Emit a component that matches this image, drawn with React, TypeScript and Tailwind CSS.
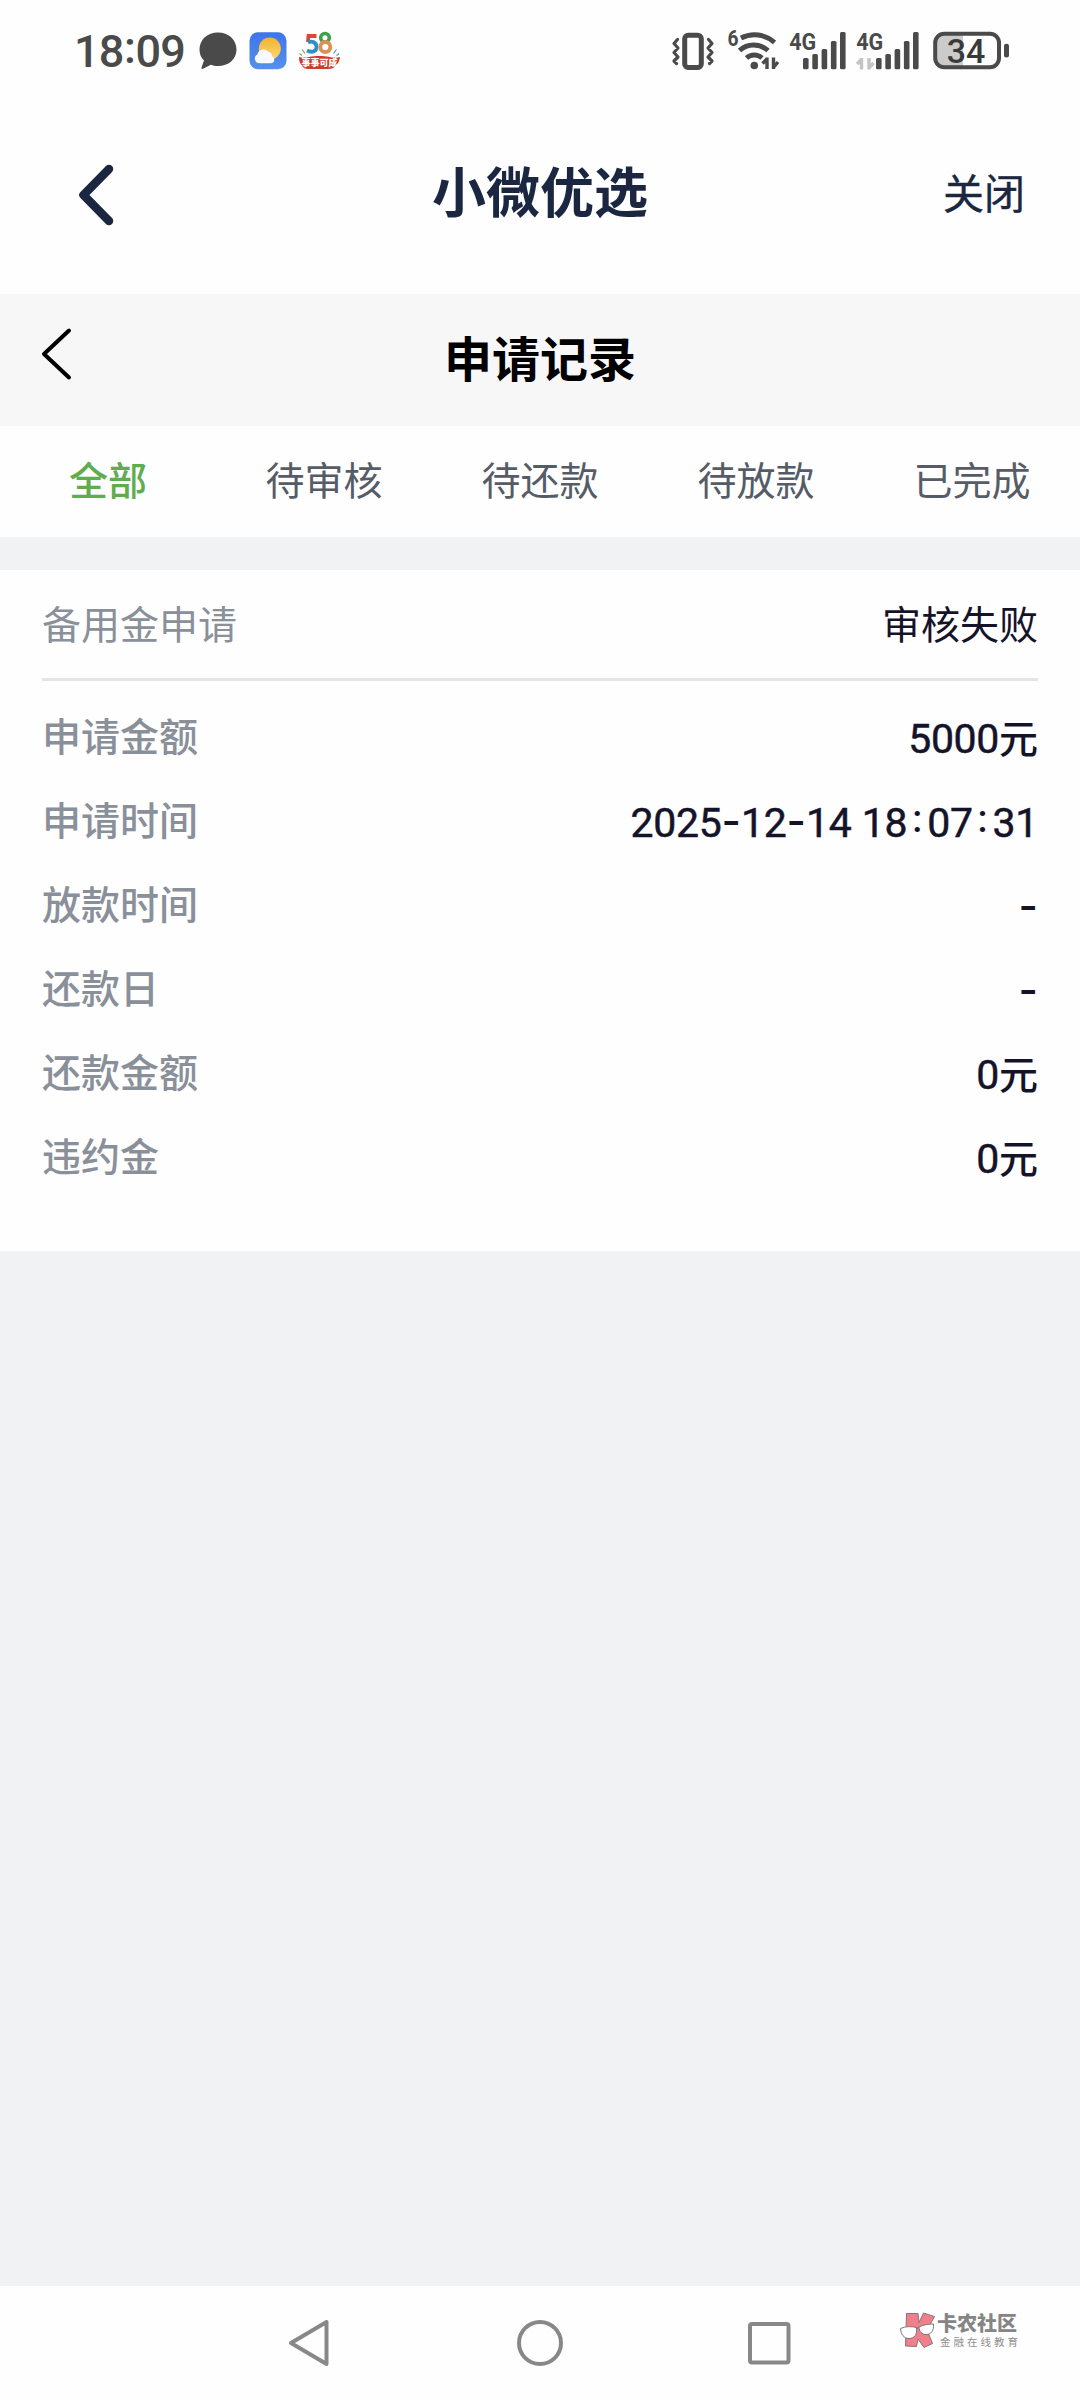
import React from "react";

const INK = "#4a4a4a";

function Bubble() {
  return (
    <svg className="ml-[14px] h-[38px] w-[38px] shrink-0" viewBox="0 0 38 38" fill={INK}>
      <path d="M19 .5C29.500 .5 37.500 7.500 37.500 17.500S29.500 34 19 34c-2.700 0-5-.4-7.200-1.300L4 36.800c-1 .5-1.800-.3-1.500-1.200L5 28.500C2 25.700.5 22 .5 17.500.5 7.500 8.500.5 19 .5Z" />
    </svg>
  );
}

function Weather() {
  return (
    <svg className="ml-[12px] h-[38px] w-[38px] shrink-0" viewBox="0 0 38 38">
      <defs>
        <linearGradient id="sky" x1="0" y1="0" x2="0" y2="1">
          <stop offset="0" stopColor="#3f74ea" />
          <stop offset="1" stopColor="#5591ea" />
        </linearGradient>
        <linearGradient id="sun" x1="0" y1="0" x2="0" y2="1">
          <stop offset="0" stopColor="#f2b42e" />
          <stop offset="1" stopColor="#fbd676" />
        </linearGradient>
      </defs>
      <rect x=".5" y=".3" width="37" height="37" rx="8.500" fill="url(#sky)" />
      <circle cx="20.800" cy="16.500" r="11" fill="url(#sun)" />
      <path d="M10.500 31.300a4.700 4.700 0 0 1-2.200-8.800A6.300 6.300 0 0 1 19 19.600a5.500 5.500 0 0 1 4.200 4.900c3.200 1 2.800 6.500-1.200 6.800Z" fill="#f7fbff" />
    </svg>
  );
}

function Promo58() {
  return (
    <svg className="ml-[11px] h-[40px] w-[44px] shrink-0" viewBox="0 0 44 40" fill="none">
      <path d="M18.500 5H10.500l-.6 6" stroke="#e0453a" strokeWidth="3.800" />
      <path d="M10 11.500c4-2 8.500 0 8.500 4.500s-4.500 6-9.500 3.500" stroke="#2f8fc9" strokeWidth="3.800" />
      <circle cx="27" cy="6.800" r="4.300" stroke="#3da24c" strokeWidth="3.600" />
      <circle cx="27.300" cy="16" r="5" stroke="#dd9154" strokeWidth="3.800" />
      <path d="M4 18.500l3 4M1.500 22.500l2.500 2" stroke="#6fa96a" strokeWidth="1.200" />
      <path d="M38.500 18.500l-3 4M41 22.500l-2.500 2" stroke="#5b8fd0" strokeWidth="1.200" />
      <path d="M1 26c6 2 10-1 20-1s15 3 21 1c-.5 4-2 7-4.500 8.500-1 2.500-4 3.500-8 3.500H11c-4 0-6-1-7-3.500C2 33 1 30 1 26Z" fill="#cf3a2c" />
      <text x="3.500" y="34.500" fontSize="9" fontWeight="900" fill="#fff" fontFamily="'Noto Sans CJK SC', sans-serif">事事可成</text>
    </svg>
  );
}

function Vibrate() {
  return (
    <svg className="h-[40px] w-[44px] shrink-0" viewBox="671 31 44 40" fill="none" stroke={INK}>
      <rect x="684.700" y="35.200" width="16.600" height="32.300" rx="3.500" strokeWidth="5" />
      <path d="M677.500 39.500l-3.500 4 4 4.500-4 4.500 4 4.500-4 4 2.500 2.500M708.500 39.500l3.500 4-4 4.500 4 4.500-4 4.500 4 4-2.500 2.500" strokeWidth="3.200" strokeLinejoin="round" strokeLinecap="round" />
    </svg>
  );
}

function Wifi() {
  return (
    <svg className="ml-[12px] h-[42px] w-[54px] shrink-0 overflow-visible" viewBox="726 30 54 42" fill="none" stroke={INK}>
      <text x="726.500" y="46" fontSize="22" fontWeight="700" fill={INK} stroke="none" textLength="11" lengthAdjust="spacingAndGlyphs" fontFamily="Roboto, sans-serif">6</text>
      <path d="M740 38c11-5.500 24-4 33.500 4.500" strokeWidth="5" />
      <path d="M738.500 50.500c8-7.500 20-7.500 28.500 0" strokeWidth="5" />
      <path d="M745.500 58c4.500-4 11-4 15.500 0" strokeWidth="4.800" />
      <circle cx="753.300" cy="65.500" r="3.800" fill={INK} stroke="none" />
      <path d="M766 57.500v11.500M766.500 58.500l-5 5M772.500 69V57.500M772 68l5-6" strokeWidth="3.400" />
    </svg>
  );
}

const BARS: [number, number][] = [[0, 58], [9.3, 54], [18.6, 49], [27.900, 41], [37, 32]];

function Signal({ data }: { data?: boolean }) {
  return (
    <svg className={data ? "ml-[10px] h-[40px] w-[62px] shrink-0 overflow-visible" : "ml-[9px] h-[40px] w-[57px] shrink-0 overflow-visible"} viewBox={data ? "0 31 62 40" : "0 31 57 40"}>
      <text x="-.8" y="50" fontSize="24.500" fontWeight="700" fill={INK} textLength="27" lengthAdjust="spacingAndGlyphs" fontFamily="Roboto, sans-serif">4G</text>
      {BARS.map(([x, y]) => (
        <rect key={x} x={x + (data ? 19 : 13)} y={y} width="5.600" height={69.300 - y} rx="1.500" fill={INK} />
      ))}
      {data && <path d="M4.500 58v11.500M5 59l-5 5M12 69.500V58M11.500 68.500l5-5.500" fill="none" stroke="#c4c4c4" strokeWidth="3.400" />}
    </svg>
  );
}

function Battery() {
  return (
    <svg className="ml-[13px] h-[42px] w-[78px] shrink-0" viewBox="932 30 78 42">
      <path d="M945 33.500h18v34h-18a9 9 0 0 1-9-9V43a9 9 0 0 1 9-9.500Z" fill="#cbcbcb" />
      <rect x="935.200" y="33.700" width="63.800" height="33.500" rx="9" fill="none" stroke={INK} strokeWidth="4" />
      <rect x="1004" y="43.800" width="5" height="13.600" rx="2.200" fill={INK} />
      <text x="966" y="62.500" textAnchor="middle" fontSize="34" fontWeight="500" fill="#3a3a3a" fontFamily="Roboto, sans-serif">34</text>
    </svg>
  );
}

function StatusBar() {
  return (
    <div className="flex h-[102px] items-center justify-between pr-[70px] pl-[74px]">
      <div className="flex items-center">
        <span className="flex w-[111px] whitespace-nowrap font-['Roboto',sans-serif] text-[45px] leading-none font-medium tracking-[-0.800px] text-[#4a4a4a]">
          18<span className="inline-block w-[13px] -translate-y-[4px] text-center">:</span>09
        </span>
        <Bubble />
        <Weather />
        <Promo58 />
      </div>
      <div className="flex items-center">
        <Vibrate />
        <Wifi />
        <Signal />
        <Signal data />
        <Battery />
      </div>
    </div>
  );
}

const TABS = ["全部", "待审核", "待还款", "待放款", "已完成"];

const ROWS: [string, string][] = [
  ["申请金额", "5000元"],
  ["申请时间", "2025-12-14 18:07:31"],
  ["放款时间", "-"],
  ["还款日", "-"],
  ["还款金额", "0元"],
  ["违约金", "0元"],
];

/* Digits are set in Roboto; hyphens, colons and the space are respaced. */
function Value({ text }: { text: string }) {
  return (
    <span className={text.endsWith("元") ? "mt-[3px] flex items-baseline whitespace-pre text-[#15132a]" : "mt-px flex items-baseline whitespace-pre text-[#15132a]"}>
      {text.split(/([-: 元])/).filter(Boolean).map((part, i) => {
        if (part === "-") return <span key={i} className="flex w-[19.600px] -translate-y-[1.500px] justify-center font-['Inter'] text-[42px] leading-none">-</span>;
        if (part === ":") return <span key={i} className="w-[20px] -translate-y-[5px] text-center text-[38px]">:</span>;
        if (part === " ") return <span key={i} className="w-[10.500px]"> </span>;
        if (part === "元") return <span key={i} className="text-[39px]">元</span>;
        return <span key={i} className="font-['Roboto'] text-[41px] leading-none font-normal tracking-[-0.350px] [-webkit-text-stroke:0.5px_#15132a]">{part}</span>;
      })}
    </span>
  );
}

function Watermark() {
  return (
    <div className="absolute top-[25px] left-[899px] flex">
      <svg className="h-[38px] w-[36px]" viewBox="0 0 36 38">
        <path d="M7.500 2.500h11.500l1 9L24.500 2l11 3.500L28 19l5.500 13.500-8.500 4-6-8.500-1.500 7.500-11-.5Z" fill="#ef7f8a" stroke="#8d7476" />
        <g fill="#fff" stroke="#777">
          <path d="M1.500 17.500c5-2.300 11-2.300 16-1 1 7-2 11-7.500 11-5 0-8-4-8.500-10Z" />
          <path d="M20 16c5-2.500 10-3 14.500-3 .5 7-2.500 10.500-7.500 10.500-4 0-7-3-7-7.500Z" />
          <path d="M17 17.500l3-1" />
        </g>
      </svg>
      <div className="ml-[2px] flex flex-col whitespace-nowrap">
        <span className="mt-[2px] text-[20px] leading-[23px] font-black text-[#858585]">卡农社区</span>
        <span className="ml-[3px] text-[10.500px] leading-[13px] tracking-[3px] text-[#8f8f8f]">金融在线教育</span>
      </div>
    </div>
  );
}

export default function App() {
  return (
    <div className="flex h-[2400px] w-[1080px] flex-col overflow-hidden bg-[#f1f2f4] font-['Roboto','Noto_Sans_CJK_SC',sans-serif]" lang="zh-CN">
      <div className="h-[294px] bg-[#fefefe]">
        <StatusBar />
        <header className="grid h-[184px] grid-cols-[1fr_auto_1fr] items-center pr-[55px] pl-[75px]">
          <svg className="h-[64px] w-[40px]" viewBox="0 0 40 64" fill="none" stroke="#1b2741" strokeWidth="8.500" strokeLinecap="round" strokeLinejoin="round">
            <path d="M34 7L8.500 33 34 59" />
          </svg>
          <h1 className="mr-[20px] pt-[2px] text-[54px] leading-none font-bold text-[#1b2741]">小微优选</h1>
          <span className="justify-self-end pt-[3px] text-[41px] leading-none text-[#1b2741] [-webkit-text-stroke:0.4px_#1b2741]">关闭</span>
        </header>
      </div>

      <div className="grid h-[132px] grid-cols-3 items-center bg-[#f7f7f7]">
        <svg className="mb-[13px] ml-[39px] h-[54px] w-[34px]" viewBox="0 0 34 54" fill="none" stroke="#000" strokeWidth="4" strokeLinecap="round" strokeLinejoin="round">
          <path d="M30 3.500L5 27 30 50.500" />
        </svg>
        <h2 className="pt-[2px] text-center text-[48px] leading-none font-bold text-black">申请记录</h2>
      </div>

      <nav className="grid h-[111px] grid-cols-5 items-center bg-[#fefefe] pt-[1px] text-center text-[39px] leading-none">
        {TABS.map((tab, i) => (
          <span key={tab} className={i === 0 ? "font-medium text-[#60ad50]" : "text-[#565c67]"}>{tab}</span>
        ))}
      </nav>

      <section className="mt-[33px] h-[681px] bg-[#fefefe] px-[42px] text-[39px] leading-none">
        <div className="flex h-[111px] items-center justify-between border-b-3 border-[#e5e5e5] pt-[4px]">
          <span className="text-[#8a909a]">备用金申请</span>
          <span className="text-[#15132a]">审核失败</span>
        </div>
        <div className="flex flex-col pt-[15px] font-medium">
          {ROWS.map(([label, value]) => (
            <div key={label} className="flex h-[84px] items-center justify-between">
              <span className="text-[#8a909a]">{label}</span>
              <Value text={value} />
            </div>
          ))}
        </div>
      </section>

      <footer className="relative mt-auto flex h-[114px] items-center bg-[#fefefe]">
        <svg className="ml-[286px] h-[50px] w-[44px]" viewBox="0 0 44 50" fill="none" stroke="#888" strokeWidth="4" strokeLinejoin="round">
          <path d="M40.500 4v42L5 25Z" />
        </svg>
        <svg className="ml-[185px] h-[50px] w-[50px]" viewBox="0 0 50 50" fill="none" stroke="#888" strokeWidth="4">
          <circle cx="25" cy="25" r="21" />
        </svg>
        <svg className="ml-[181px] h-[46px] w-[46px]" viewBox="0 0 46 46" fill="none" stroke="#888" strokeWidth="4">
          <rect x="4" y="4" width="38.500" height="38.500" rx="2" />
        </svg>
        <Watermark />
      </footer>
    </div>
  );
}
